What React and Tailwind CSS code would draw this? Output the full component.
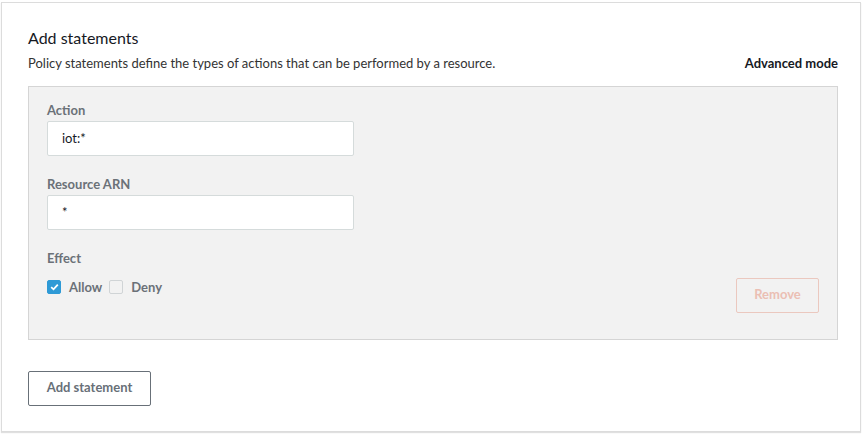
import React from 'react';

const Field = ({ label, value }) => (
  <div className="flex flex-col">
    <label className="text-[13px] font-bold text-[#6b7178] leading-[16px]">{label}</label>
    <input
      readOnly
      value={value}
      className="mt-[3px] w-[307px] h-[35px] bg-white border border-[#d5dbdb] rounded-[2px] px-[14px] text-[13px] text-[#16191f] outline-none"
    />
  </div>
);

const Checkbox = ({ checked, label }) => (
  <label className="flex items-center gap-[8px]">
    <span
      className={`w-[14px] h-[14px] rounded-[2px] flex items-center justify-center ${
        checked ? 'bg-[#2e9ad6] border border-[#2e9ad6]' : 'bg-[#f2f2f2] border border-[#d0d4d6]'
      }`}
    >
      {checked && (
        <svg width="9" height="8" viewBox="0 0 9 8">
          <path d="M1.2 4.2 L3.5 6.3 L7.8 1.6" fill="none" stroke="white" strokeWidth="1.8" />
        </svg>
      )}
    </span>
    <span className="text-[13px] font-bold text-[#6b7178]">{label}</span>
  </label>
);

export default function App() {
  return (
    <div className="w-[865px] h-[434px] bg-white pt-[2px] pl-[1px] pr-[4px] pb-[2px]" style={{ fontFamily: 'Lato, sans-serif' }}>
      <div className="h-full bg-white border border-[#dcdcdc] shadow-[0_1px_1px_rgba(0,0,0,0.12)] pl-[26px] pr-[22px] pt-[24px]">
        <h2 className="text-[16px] leading-[22px] text-[#16191f]">Add statements</h2>
        <div className="flex items-center justify-between mt-[5px]">
          <p className="text-[13px] text-[#333]">
            Policy statements define the types of actions that can be performed by a resource.
          </p>
          <a className="text-[13px] font-bold text-[#16191f]">Advanced mode</a>
        </div>

        <div className="mt-[12px] h-[254px] bg-[#f2f2f2] border border-[#d5d5d5] pl-[18px] pr-[18px] pt-[15px] flex flex-col">
          <Field label="Action" value="iot:*" />
          <div className="mt-[20px]">
            <Field label="Resource ARN" value="*" />
          </div>
          <div className="mt-[20px] text-[13px] font-bold text-[#6b7178] leading-[16px]">Effect</div>
          <div className="flex items-start justify-between">
            <div className="flex items-center gap-[7px] mt-[12px]">
              <Checkbox checked label="Allow" />
              <Checkbox label="Deny" />
            </div>
            <button className="mt-[12px] w-[83px] h-[35px] border border-[#ebc8bf] rounded-[2px] text-[13px] font-bold text-[#ebbfb4] bg-[#f2f2f2]">
              Remove
            </button>
          </div>
        </div>

        <button className="mt-[31px] w-[123px] h-[35px] border border-[#687078] rounded-[2px] text-[13px] font-bold text-[#687078] bg-white">
          Add statement
        </button>
      </div>
    </div>
  );
}
